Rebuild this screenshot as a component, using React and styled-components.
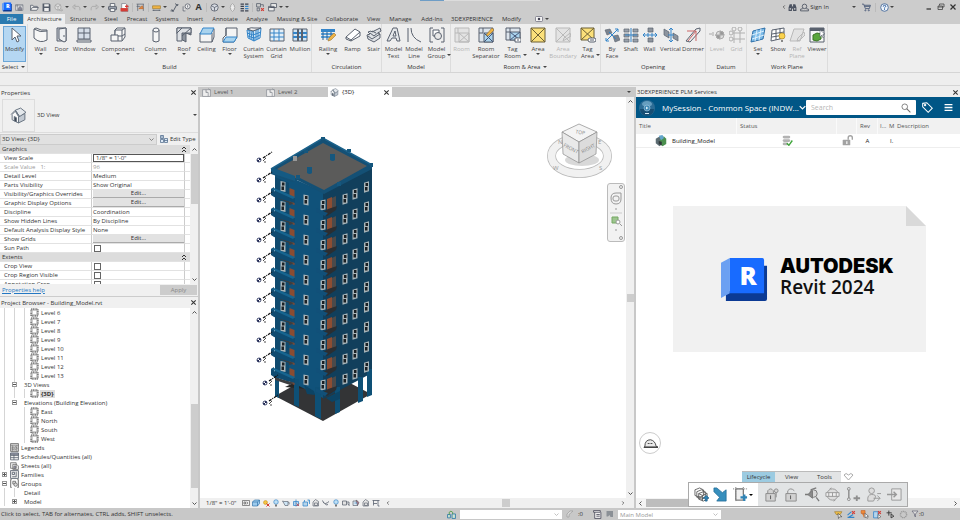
import styled, { createGlobalStyle } from "styled-components"

const GlobalStyle = createGlobalStyle`
    * { box-sizing: border-box; }
    body {
        margin: 0;
        font-family: "Open Sans", "Noto Sans", sans-serif;
        font-size: 6px;
        line-height: 8px;
        color: #333;
        background: #eee;
        overflow: hidden;
    }
    button, input, select { font: inherit; color: inherit; padding: 0; margin: 0; border: 0; border-radius: 0; background: none; }
    h1, h2, p, ul { margin: 0; padding: 0; font: inherit; list-style: none; }
    svg { display: block; flex: none; }
`;

/* ---------- icons ---------- */

const D = "#59616e";
const B = "#3485c9";
const L = "#a9d3ee";
const G = "#b9b9b9";

const curtain = (
    <g fill="#cfe5f5" stroke={B}>
        <path d="M1 3l6 1 1 10-6-3z M7 4l8-3-1 10-6 3z" />
        <path d="M3 3l1 9M5 4l1 9M10 3v10M12 2v10M1 6l6 2 8-3M2 9l6 2 6-3" fill="none" />
        <path d="M1 2q5-2 7-1l7 0-8 3z" fill="#eee" stroke={D} />
    </g>
);

const glyphs = {
    cursor: <path d="M5 1v12l3-3 2 5 2-1-2-5h4z" fill="#fff" stroke={D} />,
    wall: <path d="M1 2q6 4 13 2v9q-7 4-13-2z M1 2l2-1q5 3 11 2v1" fill="#f6f6f6" stroke={D} />,
    door: <g stroke={D}><path d="M3 1h9v13H3z" fill="#c9cdd3" /><path d="M5 2l7-1v13l-2 1-5-3z" fill="#eef0f2" /><path d="M10 8v2" /></g>,
    window: <g stroke={D}><path d="M2 1h12v11H2z" fill="#d5dde8" /><path d="M8 1v11M2 6h12M1 13h14v2H1z" fill="#eee" /></g>,
    component: <g fill="#f6f6f6" stroke={D}><path d="M5 3l2-2h8v9l-3 4H1V8h4z" /><path d="M5 3h7v6M5 3v5h3v6M12 3l3-2M8 9h4v5M12 9l3-2" /></g>,
    column: <g stroke={D} fill="#f6f6f6"><path d="M5 3v11q3 2 6 0V3z" /><ellipse cx="8" cy="3" rx="3" ry="2" /></g>,
    roof: <g stroke={D}><path d="M1 1h14v7l-5-2v9l-5-3V9L1 7z" fill="#8d949e" /><path d="M1 1h14v5H6v8H1z" fill="#dde0e4" /><path d="M1 6l5-5M6 9l9-8" fill="none" /></g>,
    ceiling: <g stroke={D}><path d="M1 6h12v9H1z" fill="#f4f4f4" /><path d="M4 1h11l-3 6H1z" fill={L} stroke={B} /><path d="M15 2v8l-2 5" fill="none" /></g>,
    floor: <g stroke={D}><path d="M4 1h11v9l-3 5H1v-4l3-3z" fill="#f4f4f4" /><path d="M4 10h11l-3 5H1z" fill={L} stroke={B} /><path d="M4 1v8" /></g>,
    curtainSystem: curtain,
    curtainGrid: <g stroke={B}><path d="M1 2h14v12H1z" fill="#e3eff8" stroke={D} /><path d="M1 6h14M1 10h14M5 2v12M10 2v12" fill="none" /></g>,
    mullion: <g stroke={D}><path d="M1 2h14v12H1z" fill="#cfe5f5" /><path d="M1 6h14M1 10h14" stroke={B} strokeWidth="2" /><path d="M6 2v12M10 2v12" strokeWidth="2" /></g>,
    railing: <g><path d="M1 2h14v3H1z" fill={B} /><path d="M1 6h13v2H1zM1 9h10v2H1z" fill="#5ca3dc" /><path d="M3 5v8M7 5v8M11 5v6" stroke="#2b5f93" /><path d="M8 14l1-3 5-5 2 2-5 5z" fill="#f0b445" stroke="#9a7433" strokeWidth=".6" /></g>,
    ramp: <g stroke={D} fill="#fff"><path d="M1 10l9-8 5 3v4l-9 5-5-2z" /><path d="M1 10l5 3 9-8M6 13v1" fill="none" /></g>,
    stair: <g stroke={D} fill="#dfe2e6"><path d="M1 8l3-1-2-2 3-1 1 1 8-4 1 3-3 2 2 1v4l-6 4-6-3z" /><path d="M2 9l4 3 8-5M4 6l4 3 5-4M6 4l4 2" fill="none" /></g>,
    modelText: <g stroke={D}><path d="M1 14L7 1h4l3 13h-3l-1-3H6l-2 3z" fill="#e4e7ea" /><path d="M7 9l2-5 1 5z" fill="#fff" /></g>,
    modelLine: <path d="M2 1v14M5 1q0 10 10 14" fill="none" stroke={D} />,
    modelGroup: <g stroke={D} fill="none"><path d="M4 1H1v14h3M12 1h3v14h-3" /><path d="M4 3h6v6H4z" fill="#fff" /><circle cx="9" cy="9" r="3.5" fill="#e8e8e8" /></g>,
    room: <g stroke={G} fill="#e3e3e3"><path d="M1 1h14v14H1zM4 1v5M1 6h4M5 6h10v9H5zM5 6l10 9M15 6L5 15" /></g>,
    roomSeparator: <g stroke={D}><path d="M1 1h14v14H1z" fill="#dce4ec" /><path d="M5 1v5H1" fill="none" /><path d="M6 6h9v9H6z" fill={L} /><path d="M6 6l9 9M15 6l-9 9" stroke="#457" /><path d="M8 8l6-7 2 2-6 6z" fill="#f0b445" stroke="#8a6a30" strokeWidth=".6" /></g>,
    tagRoom: <g stroke={D}><path d="M1 1h14v12H1z" fill="#dce4ec" /><path d="M5 1v4H1" fill="none" /><path d="M5 5h10v8H5z" fill={L} /><path d="M5 5l10 8M15 5L5 13" stroke="#457" /><path d="M10 11h6v4h-6z" fill="#fff" /><path d="M12 13h2" /></g>,
    area: <g stroke="#6b5f35"><path d="M1 1h14v14H1z" fill="#fbe07a" /><path d="M1 1l14 14M15 1L1 15" /></g>,
    areaBoundary: <g stroke={G} fill="#e3e3e3"><path d="M1 1h14v14H1zM1 1l14 14M15 1L1 15M8 14l1-3 6-5 1 3z" /></g>,
    tagArea: <g stroke="#6b5f35"><path d="M1 1h13v12H1z" fill="#fbe07a" /><path d="M1 1l13 12M14 1L1 13" /><rect x="8" y="11" width="8" height="4" rx="2" fill="#fff" stroke={D} /><path d="M10 13h4" stroke={D} /></g>,
    byFace: <g><path d="M1 3l5-1 2 4-5 2zM9 9l5-1 2 5-5 2z" fill="#7b838e" stroke={D} strokeWidth=".6" /><path d="M2 14L14 2M11 2h3v3M2 11v3h3M5 5l7 7" stroke={B} fill="none" /></g>,
    shaft: <g><path d="M1 2h5v3H1zM10 2h5v3h-5zM1 7h5v3H1zM10 7h5v3h-5zM1 12h5v3H1zM10 12h5v3h-5z" fill="#9aa1ab" stroke={D} strokeWidth=".7" /><path d="M8 1v14M2 8h12" stroke={B} /></g>,
    wallOpening: <g><path d="M6 1h5v4H6zM6 11h5v4H6z" fill="#8d949e" stroke={D} strokeWidth=".7" /><path d="M1 8h14M3 6L1 8l2 2M13 6l2 2-2 2M6 6v4M10 6v4" stroke={B} fill="none" /></g>,
    vertical: <g><path d="M1 2l5 3v6L1 8zM10 6l5 3v5l-5-3z" fill="#8d949e" stroke={D} strokeWidth=".7" /><path d="M8 1v14M6 3l2-2 2 2M6 13l2 2 2-2M5 8h6" stroke={B} fill="none" /></g>,
    dormer: <g fill="none"><path d="M1 14L11 2l4-1v3L5 15z" fill="#eee" stroke={D} /><path d="M2 4h9v10M3 14L11 4" stroke="#c66" /></g>,
    level: <g stroke="#aaa"><path d="M0 7h3M4 5v4M6 8h3" fill="none" /><circle cx="11" cy="8" r="4" fill="#ddd" /><path d="M11 4v4h4a4 4 0 0 0-4-4M11 12V8H7a4 4 0 0 0 4 4" fill="#999" /></g>,
    grid: <g stroke="#b0b0b0" fill="none"><path d="M5 4v12M11 4v12M4 6h12M4 12h12" /><circle cx="5" cy="2" r="2" /><circle cx="11" cy="2" r="2" /><circle cx="2" cy="6" r="2" /><circle cx="2" cy="12" r="2" /></g>,
    set: <g stroke="#2d6fa8"><path d="M3 4l12-3-2 11-12 3z" fill="#7cbbe8" /><path d="M2 8l12-4M2 12l12-4M7 3L5 14M11 2L9 13" fill="none" stroke="#dceffc" /></g>,
    show: <g stroke={D}><path d="M2 3l12-2v10L1 14z" fill="#fff" /><path d="M2 7l12-2M2 10l12-2M6 2v11M10 1v11" /><circle cx="12" cy="9" r="3" fill="#fbd34d" stroke="#b58f2a" strokeWidth=".7" /><path d="M11 13h2v2h-2z" fill="#888" stroke="none" /></g>,
    refPlane: <g stroke={G} fill="#e3e3e3"><path d="M5 2h10l-4 12H1zM8 14l1-3 6-6 1 3-5 5z" /></g>,
    viewer: <g><path d="M1 1h14v14H1z" fill="#f7f7f7" stroke={D} /><path d="M1 1h14v3H1z" fill={D} /><path d="M4 8l4-2 4 1v5l-4 2-4-1z" fill="#5aa63c" stroke="#3a7524" /><path d="M11 3v7l2-2 1 3 1-1-1-3h2z" fill="#fff" stroke={D} strokeWidth=".6" /></g>,

    home: <g stroke={D} fill="#eee"><path d="M1 3h13v10H1zM1 5h13M4 3v10" /><path d="M6 9l3-3 3 3v4H6z" fill="#889" /></g>,
    open: <path d="M1 13V4h4l1 2h7v2h2l-3 5zM1 13l3-5h10" fill="#eee" stroke={D} strokeWidth="1.4" />,
    save: <g><path d="M1 1h12l2 2v12H1z" fill="#545c69" /><path d="M4 2h8v4H4zM4 9h8v5H4z" fill="#eee" /></g>,
    sync: <g stroke="#a5a5a5" fill="#ddd" strokeWidth="1.4"><circle cx="7" cy="7" r="5.5" /><path d="M7 7l5-4M7 7v6M7 7L2 4M9 13h6M13 10l2 3-2 2" /></g>,
    undo: <path d="M1 7l4-4v3h7q3 2 2 7M1 7l4 4V8" fill="none" stroke="#a5a5a5" strokeWidth="1.5" />,
    redo: <path d="M15 7l-4-4v3H4q-3 2-2 7M15 7l-4 4V8" fill="none" stroke="#a5a5a5" strokeWidth="1.5" />,
    print: <g stroke="#4b5260" strokeWidth="1.4" fill="#fff"><path d="M4 6V1h8v5" /><rect x="1" y="6" width="14" height="6" rx="1" fill="#9ba2ad" /><path d="M4 10h8v5H4z" /></g>,
    pdf: <g><path d="M3 1h7l4 4v10H3z" fill="#fff" stroke={D} /><path d="M1 9h13v6H1z" fill="#d43c35" /><path d="M9 6h6M12 3v6" stroke="#d43c35" strokeWidth="2" /></g>,
    clash: <g stroke={D} fill="none" strokeWidth="1.3"><path d="M1 2h13M1 6h7M3 2v12M13 2v12" /><path d="M5 10l6-5 2 5z" fill="#e08a46" stroke="#c06a2a" /></g>,
    measure: <g><path d="M1 5h14v5H1z" fill="#f0b445" stroke="#96701f" /><path d="M1 13h14M3 12v2M13 12v2" stroke={D} strokeWidth="1.5" /></g>,
    dim: <path d="M1 14h5L12 3h3M3 11l3 5M9 1l5 4" fill="none" stroke="#4b5260" strokeWidth="1.6" />,
    tag: <g stroke="#4b5260" fill="#eee" strokeWidth="1.3"><circle cx="10" cy="6" r="4.5" /><path d="M2 6v8h4M10 4v4" /></g>,
    cube: <g stroke="#4b5260" strokeWidth="1.3" fill="#d7dbe2"><circle cx="8" cy="8" r="6.5" /><path d="M3 5l5 3 5-3M8 8v6" /></g>,
    section: <g stroke="#999" strokeWidth="1.3" fill="#eee"><circle cx="8" cy="8" r="4" /><path d="M4 5L8 1l4 4M4 11l4 4 4-4" /></g>,
    thin: <g stroke="#3b4250" strokeWidth="2"><path d="M1 2h6M9 2h6M1 6h6M1 10h6M1 14h6M9 14h6" /><path d="M9 6h6M9 10h6" stroke={B} /></g>,
    closeViews: <g fill="none" strokeWidth="1.4"><path d="M1 1h7v6H1zM8 3h5v4" stroke={D} /><path d="M2 9h4v5H2z" stroke={D} /><path d="M9 9l5 5M14 9l-5 5" stroke="#d43c35" strokeWidth="2" /></g>,
    windows: <g fill="#eee" stroke="#4b5260" strokeWidth="1.4"><path d="M5 1h10v7H5zM1 6h10v8H1zM1 8h10" /></g>,
    binoculars: <g fill="#4b5260"><path d="M3 2h4v12H1V8zM9 2h4l2 6v6H9z" /><path d="M7 6h2v4H7z" /><path d="M3 9h2v3H3zM11 9h2v3h-2z" fill="#ccc" /></g>,
    person: <g fill="none" stroke="#4b5260" strokeWidth="1.5"><circle cx="8" cy="6" r="4" /><path d="M5 10l-4 1v3h14v-3l-4-1" /></g>,
    cart: <g fill="none" stroke="#4b5a78" strokeWidth="1.6"><path d="M0 2h3l3 8h7l2-6H4M5 6h9" /><circle cx="6" cy="13" r="1" /><circle cx="12" cy="13" r="1" /></g>,
    help: <g><circle cx="8" cy="8" r="6.8" fill="#eef4fa" stroke="#4a6c9b" strokeWidth="1.6" /><path d="M5.8 6.5q0-2.5 2.2-2.5t2.2 2q0 1-2.2 2.5v1.5M8 11v1.5" fill="none" stroke="#2c5da0" strokeWidth="1.7" /></g>,
    minimize: <path d="M3 12h9" stroke="#333" strokeWidth="2.5" />,
    restore: <g fill="none" stroke="#444" strokeWidth="1.6"><path d="M5 5V2h9v6h-3M2 6h9v7H2zM2 8h9" /></g>,
    close: <path d="M3 3l10 10M13 3L3 13" stroke="#333" strokeWidth="2.4" />,
    play: <g><rect x="1" y="3" width="14" height="10" rx="2" fill="#f4f4f4" stroke="#667" strokeWidth="1.4" /><circle cx="8" cy="8" r="2.5" fill="#445" /></g>,

    house: <g stroke="#66717f" strokeWidth=".9" strokeLinejoin="round"><path d="M2 7v5l6 3V9L5 4z" fill="#fafafa" /><path d="M8 9v6l6-3V6z" fill="#c3cad3" /><path d="M5 3l5-2 5 4-6 4z" fill="#e4e8ec" /><path d="M1 7l4-4 4 6" fill="none" /><path d="M4 9l2 1v4l-2-1z" fill="#39414d" /></g>,
    editType: <g stroke="#39577c" fill="#dce9f5" strokeWidth="1.3"><path d="M1 1h6v6H1zM1 9h6v6H1zM9 7h6v8H9zM9 11h6M4 1v6" /></g>,
    tabIcon: <g stroke="#8a8f96" fill="#eee" strokeWidth="1.3"><path d="M1 3h14v12H1zM7 3v5h4M11 8v7M11 1l4 3" /></g>,
    view: <g fill="none"><path d="M2 2h12v12H2z" stroke="#7c7c7c" strokeDasharray="2 1" strokeWidth="3" /><path d="M4 4h8v8H4z" fill="#fff" stroke="#8a8a8a" /></g>,
    legends: <g stroke="#666" fill="#ddd"><path d="M1 1h14v14H1z" strokeWidth="1.4" /><path d="M1 4h14M4 7h3v5H4zM9 6l4 3-4 4zM4 4v11M12 4v11" /></g>,
    schedules: <g stroke="#5a6370" fill="#f2f2f2" strokeWidth="1.4"><path d="M1 2h14v12H1zM1 6h14M1 10h14M7 2v12" /><path d="M1 2h14v3H1z" fill="#aab" /></g>,
    sheets: <g stroke="#666" fill="#eee" strokeWidth="1.3"><path d="M1 3h10v10H1zM5 6h7l3 3v6H5z" /><path d="M7 9h3v4H7z" fill="#aac" /></g>,
    families: <g stroke="#5a6370" fill="#eee" strokeWidth="1.5"><path d="M1 1h14v14H1zM4 4h4v4H4zM11 3v9H4" /></g>,
    groups: <g stroke="#666" fill="#ddd" strokeWidth="1.4"><path d="M3 1H1v14h2M13 1h2v14h-2M5 4h5v5H5z" /><circle cx="10" cy="10" r="3" /></g>,

    model: <g><path d="M1 5l5-3 5 2v7l-5 4-5-4z" fill="#5c6c72" /><path d="M7 3l5-1 3 3v7l-5 3-4-4z" fill="#4b8f4e" /><path d="M5 1l5-1 2 4-4 3z" fill="#63a5cc" /><path d="M5 8l4 1v5l-4-2z" fill="#30373a" /></g>,
    db: <g><g fill="#b3b3b3"><rect x="1" y="1" width="11" height="4" rx="2" /><rect x="1" y="6" width="11" height="4" rx="2" /><rect x="1" y="11" width="8" height="4" rx="2" /></g><path d="M7 12l3 3 5-7" fill="none" stroke="#3fa63a" strokeWidth="2" /></g>,
    unlock: <g><rect x="1" y="7" width="11" height="8" rx="1" fill="#a2a2a2" /><path d="M9 7V4q0-3 3-3t3 3v3" fill="none" stroke="#a2a2a2" strokeWidth="2" /><path d="M6 9h2v4H6z" fill="#eee" /></g>,
    search: <g fill="none" stroke="#6d6d6d" strokeWidth="1.3"><circle cx="6" cy="6" r="4.5" /><path d="M9 9l6 6" strokeWidth="1.8" /></g>,
    tagWhite: <g fill="none" stroke="#fff" strokeWidth="1.5"><path d="M1 2l6-1 8 8-6 6-8-8z" /><circle cx="4.5" cy="4.5" r="1" /></g>,
    menu: <path d="M1 3h14M1 8h14M1 13h14" stroke="#fff" strokeWidth="2.3" />,
    compass: <g><circle cx="8" cy="8" r="8" fill="#2c6c95" /><path d="M1 9a7 7 0 0 0 14 0z" fill="#174e74" /><ellipse cx="8" cy="4" rx="5" ry="3" fill="#7fb3d2" opacity=".7" /><circle cx="8" cy="8" r="3" fill="#3e88b4" stroke="#a9cde2" strokeWidth=".6" /><path d="M7 6.5l2.5 1.5L7 9.5zM6 13h4v1H6zM2 7v2M14 7v2" fill="#d8edf8" /></g>,
    helmet: <g stroke="#444" fill="#e9e9e9"><path d="M2 11q0-7 6-7 5 1 6 7l2 1H1z" /><path d="M1 12h15" strokeWidth="1.5" /><path d="M5 8h2M8 8h2" /></g>,

    saveStack: <g fill="#fff" stroke="#555" strokeWidth=".9"><path d="M1 3l5-2 4 2v6l-4 2-5-2zM3 5l5-2 4 2v6l-4 2-5-2zM5 7l5-2 4 2v6l-4 2-5-2z" /><path d="M5 7l4 2 5-2M9 9v6M5 10l4 2 5-2" fill="none" /><path d="M13 9l3 3h-2v3h-2v-3h-2z" fill="#2f83b5" stroke="#1d648f" /></g>,
    arrowDown: <path d="M1 1l3 0 6 5 4-3v12H4l3-4-6-6z" fill="#378fbd" stroke="#1f6a95" strokeWidth=".8" />,
    newDoc: <g><path d="M3 2h8v12H3z" fill="#f0f0f0" stroke="#555" /><path d="M0 2h15M3 0v15M11 0v8" fill="none" stroke="#777" strokeDasharray="1 1" /><path d="M8 11h7M12 8v7" stroke="#2f83b5" strokeWidth="2.5" /></g>,
    lockKey: <g stroke="#8c8c8c" fill="#d2d2d2"><path d="M2 7h10v8H2zM4 7V4q3-4 6 0v3" /><path d="M7 9v4" stroke="#555" /><circle cx="13" cy="4" r="2" /><path d="M13 6v5" /></g>,
    lockOpen: <g stroke="#8c8c8c" fill="#d2d2d2"><path d="M2 7h11v8H2z" /><path d="M4 7V4q3-4 7 0" fill="none" /><path d="M7 9v4" stroke="#555" /></g>,
    find: <g stroke="#7a7a7a" fill="#d8d8d8"><path d="M0 8h4M6 3l6-2M12 11l3 4" strokeWidth="1.4" /><circle cx="9" cy="7" r="4" /><path d="M3 8l5-4v8z" fill="#8a8a8a" /></g>,
    replace: <g stroke="#999" fill="#ddd"><circle cx="8" cy="8" r="6" /><path d="M1 6h14v4H1z" fill="#eee" /><path d="M4 6v4M8 6v4M12 6v4M5 2l2-1M9 15l2-1" /></g>,
    addPoint: <g stroke="#8f8f8f" fill="none"><path d="M3 3v9" strokeWidth="1.6" /><circle cx="3" cy="2" r="1.5" /><circle cx="3" cy="13" r="1.5" /><path d="M8 12h7M11.5 9v6" strokeWidth="2" /></g>,
    share: <g stroke="#999" fill="#ddd"><circle cx="6" cy="4" r="3" /><path d="M2 15q-1-7 4-7t4 3l-2 4z" /><path d="M8 12h7M12 9l3 3-3 3M12 7h4" fill="none" /></g>,
    exit: <g stroke="#999" fill="#e8e8e8"><path d="M5 2h10v12H5z" /><path d="M0 8h9M7 5l3 3-3 3" fill="none" strokeWidth="1.5" /></g>,

    detail: <g stroke="#555" fill="#eee" strokeWidth="1.3"><path d="M1 3h14v10H1z" /><path d="M4 6h3v4H4zM9 6l3 2-3 2" /></g>,
    shaded: <g stroke="#2d6fa8" fill="#9ccbee" strokeWidth="1.3"><path d="M1 6l4-4h10v7l-4 5H1zM1 6h10v8M11 6l4-4" /></g>,
    sun: <g><circle cx="7" cy="7" r="4" fill="#f4c542" stroke="#c28a1c" /><path d="M9 9l6 6M15 9l-6 6" stroke="#d43c35" strokeWidth="2" /></g>,
    bulb: <g><circle cx="8" cy="6" r="4.5" fill="#bfe0f5" stroke={B} strokeWidth="1.3" /><path d="M6 11h4v4H6z" fill="#777" /></g>,
    tea: <g stroke={D} fill="#cde4f4" strokeWidth="1.3"><path d="M1 4l3 1h8v8H6L4 9zM12 6q4 0 2 5" /></g>,
    crop: <g fill="#b5d5ec" stroke={B} strokeWidth="1.5"><path d="M3 5h10v8H3zM8 1v14" /><path d="M9 9l5 5M14 9l-5 5" stroke="#d43c35" /></g>,
    cropShow: <g fill="#b5d5ec" stroke={B} strokeWidth="1.5"><path d="M2 6h9v8H2zM11 2h4v8M5 2v4" /></g>,
    lockView: <g fill="#e2e2e2" stroke={D} strokeWidth="1.3"><path d="M2 6l5-5 6 4v9H2zM5 8h6v5H5z" /></g>,
    glasses: <path d="M1 3q2 7 6 6t7-4M6 9q2 5 6 2" fill="none" stroke={D} strokeWidth="1.7" />,
    box: <g fill="#e2e2e2" stroke={D} strokeWidth="1.5"><path d="M1 4h8v8H1zM9 6h5v6M11 9l4 5" /></g>,
    analysis: <g fill="#dbe7f0" stroke={D} strokeWidth="1.3"><path d="M2 4h9v9H2z" /><path d="M8 2l6 5-3 6z" fill="#d77" /><path d="M5 8h7" stroke={B} /></g>,
    reveal: <path d="M1 3h14M3 3v10M3 9h7M12 3v11h3" fill="none" stroke={D} strokeWidth="1.6" />,
    filter: <path d="M2 2h12l-5 6v6l-2-2V8z" fill="#ddd" stroke="#667" strokeWidth="1.4" />,
    select: <g><path d="M1 3h13l-3 5H4z" fill="#f0c14b" stroke="#96701f" /><path d="M7 6l1 9 2-3h4z" fill="#fff" stroke="#333" /></g>,
    selectLink: <g><path d="M1 9l7-6M3 13l8-5M1 13h12" stroke={B} strokeWidth="2" /><path d="M9 2l5 5M14 2L9 7" stroke="#d43c35" strokeWidth="2" /></g>,
    selectPin: <g><path d="M2 1h7v5H2zM4 7h3v6" fill="#f08c3a" stroke="#c05a1a" /><path d="M9 6v8l2-2 2 3 1-1-1-3h2z" fill="#fff" stroke="#444" /></g>,
    selectFace: <g><path d="M1 3h8v11H1z" fill="#b5d5ec" stroke={B} strokeWidth="1.4" /><path d="M9 2l5 5M14 2L9 7" stroke="#d43c35" strokeWidth="2" /><path d="M9 8v7l5-3z" fill="#fff" stroke="#444" /></g>,
    drag: <g fill="none" stroke="#333" strokeWidth="1.6"><path d="M1 5h9M5 1v9M9 7v7l5-3z" /></g>,
    gear: <circle cx="8" cy="8" r="5.5" fill="none" stroke="#999" strokeWidth="2.5" strokeDasharray="2 1" />,
    worksets: <g fill="#cfe3d0" stroke="#2c7aa8" strokeWidth="1.5"><path d="M1 8h5v6H1zM9 7h6v8H9z" /><path d="M4 8V4q3-4 6 0v3" fill="none" stroke="#4b9d3f" /></g>,
    pen: <path d="M2 14V8l6-6h6l-8 7v5z" fill="#ddd" stroke="#999" strokeWidth="1.3" />,
    options: <g fill="#eee" stroke="#445" strokeWidth="1.4"><path d="M1 1h12v3H1zM3 4v11h11V4M6 8h6M6 11h6" /></g>,
    exclude: <path d="M1 2h13v12H9l-2-4-3 3H1z" fill="#8b9096" />,
};

const Icon = ({ name, size = 9 }) => (
    <svg width={size} height={size} viewBox="0 0 16 16" fill="none" aria-hidden="true">{glyphs[name]}</svg>
);

const Caret = styled.i`
    flex: none;
    width: 0;
    height: 0;
    border: 2px solid transparent;
    border-top-color: ${({ $color }) => $color || "#444"};
    border-bottom: 0;
`;

const Chevron = ({ dir = "down", size = 6, color = "#444" }) => {
    const d = { down: "M1 3l4 4 4-4", up: "M1 7l4-4 4 4", left: "M7 1L3 5l4 4", right: "M3 1l4 4-4 4" }[dir];
    return <svg width={size} height={size} viewBox="0 0 10 10"><path d={d} fill="none" stroke={color} strokeWidth="1.8" /></svg>
};

/* ---------- shell ---------- */

const Shell = styled.div`
    height: 100vh;
    display: flex;
    flex-direction: column;
`;

const Spacer = styled.span`
    flex: ${({ $w }) => ($w ? `0 0 ${$w}px` : "1")};
`;

const TitleBar = styled.header`
    display: flex;
    align-items: center;
    height: 14px;
    background: #ccc;
`;

const Progress = styled.span`
    position: absolute;
    top: 0;
    left: 420px;
    width: 120px;
    height: 1px;
    background: linear-gradient(to right, #6e9dc6 24px, #dcdcdc 24px);
`;

const QuickAccess = styled.div`
    display: flex;
    align-items: center;
    gap: 3px;
    padding: 0 2px;
    ${Caret} { margin: 0 0 0 -1px; }
`;

const IconButton = styled.button`
    display: flex;
    align-items: center;
    justify-content: center;
    width: ${({ $w }) => ($w || 9)}px;
    height: 12px;
    font-size: 9px;
    font-weight: 700;
`;

const Divider = styled.span`
    width: 1px;
    height: 9px;
    background: #bbb;
`;

const SignIn = styled.button`
    width: 19px;
    white-space: nowrap;
`;

const TabBar = styled.nav`
    display: flex;
    align-items: stretch;
    height: 10px;
    background: #ccc;
`;

const Tab = styled.button`
    display: flex;
    align-items: center;
    justify-content: center;
    gap: 2px;
    width: ${({ $w }) => $w}px;
    white-space: nowrap;
    background: ${({ $active }) => ($active ? "#eee" : "none")};
`;

const FileTab = styled(Tab)`
    margin-right: 1px;
    color: #fff;
    background: #2a7ab0;
`;

const Ribbon = styled.div`
    display: flex;
    height: 49px;
    background: #eee;
    border-bottom: 1px solid #d5d5d5;
`;

const Group = styled.section`
    display: flex;
    flex-direction: column;
    padding-top: 2px;
    border-right: 1px solid #dcdcdc;
`;

const Tools = styled.div`
    flex: 1;
    display: flex;
    padding-left: ${({ $pad }) => $pad}px;
`;

const GroupName = styled.h2`
    display: flex;
    align-items: center;
    justify-content: center;
    gap: 3px;
    height: 10px;
    white-space: nowrap;
`;

const Tool = styled.button`
    width: ${({ $w }) => $w}px;
    height: 36px;
    display: flex;
    flex-direction: column;
    align-items: center;
    padding-top: 1px;
    line-height: 7px;
    white-space: nowrap;
    color: ${({ disabled }) => (disabled ? "#b5b5b5" : "#444")};
`;

const ModifyTool = styled(Tool)`
    background: #b5d7f2;
    border: 1px solid #6ba5d6;
    padding-top: 0;
`;

const ToolLabel = styled.span`
    margin-top: 3px;
    text-align: center;
`;

const SideCaret = styled(Caret)`
    display: inline-block;
    margin: 0 -6px 2px 2px;
`;

const Gutter = styled.div`
    height: 13px;
    background: #eee;
    border-bottom: 1px solid #d5d5d5;
`;

const ribbon = [
    { name: "Build", pad: 2, tools: [
        ["wall", "Wall", 21, 1], ["door", "Door", 21], ["window", "Window", 24], ["component", "Component", 44, 1],
        ["column", "Column", 31, 1], ["roof", "Roof", 26, 1], ["ceiling", "Ceiling", 19], ["floor", "Floor", 27, 1],
        ["curtainSystem", "Curtain|System", 21], ["curtainGrid", "Curtain|Grid", 25], ["mullion", "Mullion", 22]] },
    { name: "Circulation", pad: 5, tools: [["railing", "Railing", 22, 1], ["ramp", "Ramp", 27], ["stair", "Stair", 15]] },
    { name: "Model", pad: 0, tools: [["modelText", "Model|Text", 23], ["modelLine", "Model|Line", 18], ["modelGroup", "Model|Group", 27, 1]] },
    { name: "Room & Area", pad: 0, menu: true, tools: [
        ["room", "Room", 21, 0, 1], ["roomSeparator", "Room|Separator", 28], ["tagRoom", "Tag|Room", 25, 1],
        ["area", "Area", 26, 1], ["areaBoundary", "Area|Boundary", 24, 0, 1], ["tagArea", "Tag|Area", 25, 1]] },
    { name: "Opening", pad: 0, tools: [
        ["byFace", "By|Face", 22], ["shaft", "Shaft", 16], ["wallOpening", "Wall", 21], ["vertical", "Vertical", 21], ["dormer", "Dormer", 24]] },
    { name: "Datum", pad: 1, tools: [["level", "Level", 20, 0, 1], ["grid", "Grid", 19, 0, 1]] },
    { name: "Work Plane", pad: 0, tools: [["set", "Set", 22, 1], ["show", "Show", 18], ["refPlane", "Ref|Plane", 20, 0, 1], ["viewer", "Viewer", 20]] },
];

const RibbonTool = ({ icon, label, w, menu, disabled }) => {
    const [first, second] = label.split("|");
    return (
        <Tool $w={w} disabled={disabled}>
            <Icon name={icon} size={16} />
            <ToolLabel>
                {first}
                {second && <><br />{second}</>}
                {second && menu ? <SideCaret /> : null}
            </ToolLabel>
            {menu && !second ? <Caret /> : null}
        </Tool>
    )
};

const tabs = [
    ["Structure", 36], ["Steel", 20], ["Precast", 32], ["Systems", 28], ["Insert", 28], ["Annotate", 32], ["Analyze", 32],
    ["Massing & Site", 48], ["Collaborate", 42], ["View", 21], ["Manage", 33], ["Add-Ins", 30], ["3DEXPERIENCE", 50], ["Modify", 29],
];

const quick = ["home", "gap", "open", "save", "sync", "v", "undo", "v", "redo", "v", "print", "pdf", "|", "clash", "|", "measure", "v", "dim", "tag", "A", "|", "cube", "v", "section", "thin", "|", "closeViews", "windows", "v", "v"];

const quickItem = (q, i) => {
    if (q === "v") return <Caret key={i} />;
    if (q === "|") return <Divider key={i} />;
    if (q === "gap") return <span key={i} />;
    return <IconButton key={i} aria-label={q}>{q === "A" ? "A" : <Icon name={q} />}</IconButton>
};

const AppBadge = ({ size }) => (
    <svg width={size} height={size} viewBox="0 0 48 48">
        <path d="M5 36h42v8a2 2 0 0 1-2 2H5zM40 10h7v30h-7z" fill="#0b3a94" />
        <path d="M0 7l9-5v36l-9 5z" fill="#6ba0f2" />
        <path d="M9 2h33a2 2 0 0 1 2 2v34H9z" fill="#186bff" />
        <text x="19" y="30" fontFamily="Open Sans" fontWeight="800" fontSize="26" fill="#fff">R</text>
    </svg>
);

/* ---------- docked panels ---------- */

const Workspace = styled.main`
    flex: 1;
    min-height: 0;
    display: flex;
    padding-top: 1px;
`;

const Dock = styled.aside`
    width: 200px;
    display: flex;
    flex-direction: column;
    background: #f0f0f0;
    border-right: 2px solid #c8c8c8;
`;

const PanelTitle = styled.h2`
    flex: none;
    display: flex;
    align-items: center;
    justify-content: space-between;
    height: ${({ $h }) => $h || 11}px;
    padding: 0 1px;
    white-space: nowrap;
`;

const TypeRow = styled.div`
    flex: none;
    display: flex;
    align-items: center;
    gap: 2px;
    height: 35px;
    padding: 0 1px 0 2px;
    border-bottom: 1px solid #ddd;
`;

const Thumb = styled.div`
    display: grid;
    place-items: center;
    width: 33px;
    height: 33px;
    border: 1px solid #ddd;
`;

const PickRow = styled.div`
    flex: none;
    display: flex;
    align-items: center;
    height: 12px;
`;

const Picker = styled.label`
    display: grid;
    align-items: center;
    width: ${({ $w }) => $w}px;
    height: ${({ $h }) => $h || 9}px;
    background: ${({ $bg }) => $bg || "#fff"};
    border: 1px solid ${({ $line }) => $line || "#fff"};
    & > * { grid-area: 1 / 1; }
    & > svg { justify-self: end; margin-right: 2px; pointer-events: none; }
`;

const Select = styled.select`
    appearance: none;
    width: 100%;
    height: 8px;
    padding: 0 1px;
    color: ${({ $muted }) => ($muted ? "#999" : "#333")};
`;

const EditType = styled.button`
    display: flex;
    align-items: center;
    gap: 2px;
    margin-left: 3px;
    white-space: nowrap;
`;

const Scrolled = styled.div`
    display: flex;
    overflow: hidden;
    background: #fff;
    flex: ${({ $h }) => ($h ? `0 0 ${$h}px` : "1 1 0")};
    min-height: 0;
`;

const Track = styled.div`
    flex: none;
    width: 8px;
    display: flex;
    flex-direction: column;
    align-items: center;
    justify-content: space-between;
    padding: 2px 0;
    background: #f0f0f0;
`;

const Grip = styled.span`
    width: 7px;
    height: ${({ $h }) => $h}px;
    margin-top: ${({ $top }) => $top}px;
    margin-bottom: auto;
    background: #cdcdcd;
`;

const PropTable = styled.table`
    flex: 1;
    width: 190px;
    height: max-content;
    border-collapse: separate;
    border-spacing: 0;
    table-layout: fixed;
    td, th {
        height: 9px;
        padding: 0;
        border-bottom: 1px solid #e2e2e2;
        line-height: 8px;
        font-weight: 400;
        text-align: left;
        white-space: nowrap;
    }
    td:first-child { padding-left: 4px; border-right: 1px solid #ccc; }
    td:nth-child(2) { border-right: 1px solid #ccc; padding-left: 1px; }
`;

const Section = styled.th`
    background: #dcdcdc;
    & > span { display: flex; justify-content: space-between; padding: 0 3px 0 2px; }
`;

const Muted = styled.span`
    color: #999;
    margin-right: ${({ $gap }) => $gap || 0}px;
`;

const ScaleInput = styled.input`
    display: block;
    width: 91px;
    height: 8px;
    padding: 0 2px;
    border: 1px solid #555;
    line-height: 6px;
`;

const EditButton = styled.button`
    display: block;
    width: 91px;
    height: 8px;
    background: #e2e2e2;
    border-bottom: 1px solid #aaa;
    line-height: 7px;
`;

const Check = styled.input`
    appearance: none;
    display: block;
    width: 7px;
    height: 7px;
    margin-left: 1px;
    border: 1px solid #666;
    background: #fff;
`;

const HelpRow = styled.div`
    flex: none;
    display: flex;
    align-items: center;
    justify-content: space-between;
    height: 13px;
    padding: 0 1px 1px 2px;
    border-bottom: 1px solid #ccc;
    a { color: #2477c2; }
`;

const Apply = styled.button`
    width: 37px;
    height: 10px;
    background: #ccc;
    color: #888;
`;

const properties = [
    ["#", "Graphics"],
    ["View Scale", "input"],
    ["Scale Value", "muted"],
    ["Detail Level", "Medium"],
    ["Parts Visibility", "Show Original"],
    ["Visibility/Graphics Overrides", "edit"],
    ["Graphic Display Options", "edit"],
    ["Discipline", "Coordination"],
    ["Show Hidden Lines", "By Discipline"],
    ["Default Analysis Display Style", "None"],
    ["Show Grids", "edit"],
    ["Sun Path", "check"],
    ["#", "Extents"],
    ["Crop View", "check"],
    ["Crop Region Visible", "check"],
    ["Annotation Crop", "check"],
];

const PropValue = ({ label, kind }) => {
    if (kind === "input") return <ScaleInput aria-label={label} defaultValue={`1/8" = 1'-0"`} />;
    if (kind === "muted") return <Muted>96</Muted>;
    if (kind === "edit") return <EditButton aria-label={`Edit ${label}`}>Edit...</EditButton>;
    if (kind === "check") return <Check type="checkbox" aria-label={label} />;
    return kind
};

const PropRow = ({ label, kind }) => {
    if (label === "#") {
        return (
            <tr>
                <Section colSpan={3}>
                    <span>{kind}<svg width="6" height="8" viewBox="0 0 6 8"><path d="M1 4l2-2 2 2M1 7l2-2 2 2" fill="none" stroke="#333" /></svg></span>
                </Section>
            </tr>
        )
    }
    return (
        <tr>
            <td>{kind === "muted" ? <><Muted $gap={5}>{label}</Muted><Muted>1:</Muted></> : label}</td>
            <td><PropValue label={label} kind={kind} /></td>
            <td />
        </tr>
    )
};

const Tree = styled.ul`
    flex: 1;
    white-space: nowrap;
`;

const Node = styled.li`
    display: flex;
    align-items: center;
    gap: ${({ $icon }) => ($icon ? 2 : 6)}px;
    height: 9px;
    padding-left: ${({ $indent }) => $indent}px;
    background: ${({ $rails }) => ($rails || []).map((x) => `linear-gradient(#d5d5d5, #d5d5d5) ${x}px 0 / 1px 100% no-repeat`).join(", ") || "none"};
`;

const Toggle = styled.button`
    width: 5px;
    height: 5px;
    margin-right: 1px;
    border: 1px solid #999;
    background:
        linear-gradient(#555, #555) center / 3px 1px no-repeat,
        linear-gradient(#555, #555) center / ${({ $open }) => ($open ? 0 : 1)}px 3px no-repeat,
        #fff;
`;

const NodeText = styled.span`
    ${({ $selected }) => $selected && "background: #ddd; font-weight: 700; padding: 0 1px; margin-left: -1px;"}
`;

const level = (n) => ({ text: n, icon: "view", indent: 30, rails: [4, 14, 24] });
const tree = [
    ...[6, 7, 8, 9, 10, 11, 12, 13].map((n) => level(`Level ${n}`)),
    { text: "3D Views", open: true, toggle: true, indent: 12, rails: [4, 14] },
    { text: "{3D}", icon: "view", indent: 30, rails: [4, 14, 24], selected: true },
    { text: "Elevations (Building Elevation)", open: true, toggle: true, indent: 12, rails: [4] },
    ...["East", "North", "South", "West"].map((n) => ({ text: n, icon: "view", indent: 30, rails: [4, 24] })),
    { text: "Legends", icon: "legends", indent: 10, rails: [4] },
    { text: "Schedules/Quantities (all)", icon: "schedules", indent: 10, rails: [4] },
    { text: "Sheets (all)", icon: "sheets", indent: 10, rails: [4] },
    { text: "Families", icon: "families", toggle: true, indent: 2 },
    { text: "Groups", icon: "groups", toggle: true, open: true, indent: 2 },
    { text: "Detail", indent: 24, rails: [4, 14] },
    { text: "Model", toggle: true, indent: 12, rails: [4] },
];

/* ---------- drawing area ---------- */

const Center = styled.section`
    flex: 1;
    min-width: 0;
    display: flex;
    flex-direction: column;
    background: #fff;
    border-right: 2px solid #c8c8c8;
`;

const ViewTabs = styled.div`
    flex: none;
    display: flex;
    align-items: center;
    height: 10px;
    background: #c8c8c8;
    padding-right: 3px;
`;

const ViewTab = styled.button`
    display: flex;
    align-items: center;
    gap: 3px;
    width: 64px;
    height: 10px;
    padding: 0 2px;
    background: ${({ $active }) => ($active ? "#fff" : "none")};
    color: ${({ $active }) => ($active ? "#222" : "#555")};
    & > svg:last-child:not(:first-child) { margin-left: auto; }
`;

const CanvasRow = styled.div`
    flex: 1;
    min-height: 0;
    display: flex;
`;

const Canvas = styled.div`
    position: relative;
    flex: 1;
    overflow: hidden;
`;

const BuildingSvg = styled.svg`
    position: absolute;
    left: 50px;
    top: 32px;
`;

const CubeSvg = styled.svg`
    position: absolute;
    right: 12px;
    top: 23px;
`;

const NavBar = styled.div`
    position: absolute;
    right: 1px;
    top: 86px;
    width: 18px;
    height: 59px;
    border: 1px solid #bbb;
    border-radius: 3px;
    background: #f2f2f2;
`;

const ViewControls = styled.div`
    flex: none;
    display: flex;
    align-items: center;
    gap: 2px;
    height: 10px;
    padding: 0 9px 0 6px;
    background: #f0f0f0;
    white-space: nowrap;
`;

const HGrip = styled.span`
    width: ${({ $w }) => $w}px;
    height: 8px;
    background: ${({ $dark }) => ($dark ? "#bdbdbd" : "#cdcdcd")};
`;

const Window = ({ x, y, s }) => (
    <g transform={`translate(${x} ${y})`}>
        <path d={`M-2.5 ${-5 - s}L2.5 ${-5 + s}V${5 + s}L-2.5 ${5 - s}z`} fill="#a9b4b8" />
        <path d="M-1 -4h2.500v3h-2.500zM-1.500 0h2.500v3.500h-2.500z" fill="#1b2125" />
    </g>
);

const floors = Array.from({ length: 10 }, (_, i) => i * 20);

const Building = () => (
    <BuildingSvg width="130" height="300" viewBox="250 130 130 300">
        <path d="M275 397l48-27 48 25-48 27z" fill="#333436" />
        <path d="M285 388l38-18 20 10-12 12z" fill="#252525" />
        <path d="M275 171l48 22v206l-48-24z" fill="#10527a" />
        <path d="M323 193l49-25v206l-49 26z" fill="#113f5c" />
        <path d="M275 370h4v29l-4-2zM294 380h5v28l-5-2zM315 388h6v32l-6-3zM335 388h5v25l-5 2zM358 378h5v24l-5 2zM367 370h5v26l-5 2z" fill="#0e5076" />
        <path d="M304 386l10 6 1 4-8-1zM326 399l14-7v8l-8 3z" fill="#0c4465" />
        <path d="M271 170l52-31 49 27v4l-48 25-27-14-4 2-22-8z" fill="#145075" />
        <path d="M277 170l46-26 44 23-43 24-26-13-5 2-14-6z" fill="#5b5b5a" />
        <path d="M271 170l52-31 49 27" fill="none" stroke="#1c628b" strokeWidth="1.5" />
        <path d="M293 157h4v5h-4z" fill="#999" />
        <path d="M307 168h5v6q-2 2-5 0zM330 155h5v6q-2 2-5 0zM304 151h4v3h-4zM321 138h4v3h-4zM347 150h4v3h-4zM370 164h3v4h-3zM296 176h4v4h-4zM337 183h4v4h-4z" fill="#15577e" />
        {floors.map((f) => (
            <g key={f} transform={`translate(0 ${f})`}>
                <path d="M275 178l14 6v19l-14-6z" fill="#0f4a6e" />
                <path d="M289.5 189l5 2v15l-5-2z" fill="#8b4c31" />
                <path d="M327 200l5-2v12l-5 2z" fill="#8d4d32" />
                <path d="M332 199l4-2v11l-4 3z" fill="#4c4a4a" />
                <Window x={283} y={187.5} s={.5} />
                <Window x={306} y={201} s={.5} />
                <Window x={323} y={206} s={-.5} />
                <Window x={345} y={200} s={-.8} />
                <Window x={355} y={195} s={-.8} />
                <Window x={366.5} y={188} s={-.8} />
                <path d="M275 198l19 6-4 2-15-5z" fill="#3d3e40" />
                <path d="M271 190l3-2v4l21 7v5l-21-6-3-2z" fill="#0f4b70" />
                <path d="M271 190l3-1 21 9-2 2z" fill="#176590" />
                <path d="M322 214l6-4 9-3-1 4-9 6z" fill="#2c2e31" />
                <path d="M316 209l9 4 3 1-3 3-9-4z" fill="#115079" />
            </g>
        ))}
        <path d="M271 170l3-1 21 8v5l-21-7-3-1z" fill="#145a83" />
        {[161, 181, 201, 221, 241, 261, 281, 301, 321, 341, 361, 384, 404].map((y, i) => (
            <g key={y} transform={`translate(${i > 10 ? 265 : 259} ${y})`}>
                <circle r="2" fill="#fff" stroke="#1b2450" strokeWidth=".8" />
                <path d="M0-2v2h2a2 2 0 0 0-2-2M0 2V0h-2a2 2 0 0 0 2 2" fill="#1b2450" />
                <path d="M4-2l9-6" stroke="#111" strokeWidth="1.3" strokeDasharray="3 1 1 1" />
                <path d="M4 1l3-3M5 2h2" stroke="#222" strokeWidth=".8" />
            </g>
        ))}
    </BuildingSvg>
);

const ViewCube = () => (
    <CubeSvg width="68" height="60" viewBox="546 120 68 60">
        <ellipse cx="579.5" cy="156" rx="28" ry="17.5" fill="none" stroke="#b9b9b9" strokeWidth="9" />
        <ellipse cx="579.5" cy="156" rx="28" ry="17.5" fill="none" stroke="#f1f1f1" strokeWidth="7.5" />
        <ellipse cx="582" cy="160" rx="17" ry="6" fill="#d8d8d8" />
        <g fontSize="6" fill="#999"><text x="553" y="170">W</text><text x="599" y="170">S</text><text x="558" y="144">N</text><text x="598" y="144">E</text></g>
        <g stroke="#8b8b8b" strokeWidth=".7">
            <path d="M579 124l18 8-18 10-17-10z" fill="#f4f4f4" />
            <path d="M562 132l17 10v21l-16-9z" fill="#e9e9e9" />
            <path d="M597 132l-18 10v21l17-9z" fill="#dcdcdc" />
        </g>
        <g fontSize="5" fill="#888" textAnchor="middle">
            <text transform="translate(580 134) rotate(10)">TOP</text>
            <text transform="translate(570 150) rotate(28)">FRONT</text>
            <text transform="translate(589 150) rotate(-28)">RIGHT</text>
        </g>
    </CubeSvg>
);

/* ---------- PLM panel ---------- */

const Plm = styled.section`
    position: relative;
    width: 324px;
    display: flex;
    flex-direction: column;
    background: #fff;
`;

const PlmTitle = styled(PanelTitle)`
    background: #eee;
`;

const PlmBar = styled.div`
    flex: none;
    display: flex;
    align-items: center;
    height: 21px;
    padding: 0 7px 0 3px;
    background: #005686;
    color: #fff;
`;

const Session = styled.button`
    display: flex;
    align-items: center;
    justify-content: space-between;
    flex: 1;
    min-width: 0;
    padding: 0 2px 0 7px;
    font-size: 8px;
    line-height: 12px;
    white-space: nowrap;
`;

const SearchBox = styled.label`
    display: flex;
    align-items: center;
    width: 110px;
    height: 15px;
    padding: 0 5px;
    background: #fff;
    border-radius: 1px;
    margin-right: 5px;
`;

const SearchInput = styled.input`
    flex: 1;
    min-width: 0;
    font-size: 7px;
    outline: 0;
    &::placeholder { color: #b5b5b5; }
`;

const ItemTable = styled.table`
    width: 100%;
    table-layout: fixed;
    border-collapse: separate;
    border-spacing: 0;
    th, td {
        padding: 0 0 0 3px;
        font-weight: 400;
        text-align: left;
        white-space: nowrap;
        overflow: hidden;
    }
    th { height: 16px; background: #f1f1f1; border-right: 1px solid #fafafa; color: #555; }
    th:nth-child(n + 5) { padding-left: 2px; border-right: 0; }
    td { height: 14px; border-bottom: 1px solid #eee; color: #222; }
    svg { margin: 0 auto; }
`;

const Col = styled.col`
    width: ${({ $w }) => ($w ? `${$w}px` : "auto")};
`;

const ItemName = styled.span`
    display: flex;
    align-items: center;
    gap: 5px;
    padding-left: 16px;
    svg { margin: 0; }
`;

const Centered = styled.td`
    && { text-align: center; padding: 0; }
`;

const Preview = styled.div`
    position: relative;
    display: flex;
    align-items: center;
    gap: 12px;
    height: 146px;
    margin: 58px 34px 0 37px;
    padding-left: 48px;
    background: #f1f1f1;
    clip-path: polygon(0 0, calc(100% - 20px) 0, 100% 20px, 100% 100%, 0 100%);
    &::after {
        content: "";
        position: absolute;
        top: 0;
        right: 0;
        width: 20px;
        height: 20px;
        background: #d9d9d9;
    }
`;

const BrandBlock = styled.div`
    padding-bottom: 5px;
`;

const Brand = styled.p`
    font-family: Inter, sans-serif;
    font-weight: 900;
    font-size: 20px;
    line-height: 20px;
    color: #000;
`;

const Product = styled.p`
    font-weight: 600;
    font-size: 19px;
    line-height: 22px;
    color: #111;
`;

const RoundButton = styled.button`
    position: absolute;
    left: 3px;
    bottom: 54px;
    display: grid;
    place-items: center;
    width: 22px;
    height: 22px;
    border: 1px solid #ccc;
    border-radius: 50%;
    background: #fff;
`;

const ActionDock = styled.div`
    position: absolute;
    right: 52px;
    bottom: 1px;
    width: 220px;
`;

const ActionTabs = styled.div`
    display: flex;
    align-items: center;
    padding-left: 54px;
`;

const ActionTab = styled.button`
    width: 33px;
    height: 11px;
    background: ${({ $active }) => ($active ? "#9ccbe1" : "#e2e4e5")};
    color: #333;
    border-top: 1px solid #bbb;
`;

const Heart = styled.svg`
    margin-left: 2px;
`;

const Actions = styled.div`
    display: flex;
    height: 25px;
    border: 1px solid #aaa;
    background: #e2e4e5;
`;

const ActionSet = styled.div`
    display: flex;
    align-items: center;
    justify-content: space-evenly;
    width: ${({ $w }) => $w}px;
    background: ${({ $white }) => ($white ? "#fff" : "none")};
    ${Caret} { margin-left: -3px; }
`;

const HTrack = styled.div`
    display: flex;
    align-items: center;
    gap: 3px;
    height: 10px;
    margin-top: auto;
    padding: 0 2px;
    background: #f4f4f4;
`;

/* ---------- status bar ---------- */

const StatusBar = styled.footer`
    flex: none;
    display: flex;
    align-items: center;
    height: 12px;
    padding: 0 36px 0 1px;
    background: #c8c8c8;
    white-space: nowrap;
`;

const StatusText = styled.span`
    width: 446px;
`;

const StatusGroup = styled.span`
    display: flex;
    align-items: center;
    gap: 4px;
    margin: 0 ${({ $m }) => $m || 0}px;
`;

const App = () => {
    return (
        <Shell>
            <GlobalStyle />
            <TitleBar>
                <QuickAccess>
                    <AppBadge size={10} />
                    {quick.map(quickItem)}
                </QuickAccess>
                <Progress />
                <Spacer />
                <Chevron dir="left" size={4} />
                <IconButton $w={12} aria-label="Find"><Icon name="binoculars" /></IconButton>
                <IconButton $w={12} aria-label="Account"><Icon name="person" /></IconButton>
                <SignIn>Sign In</SignIn>
                <Spacer $w={23} />
                <Caret />
                <Spacer $w={4} />
                <IconButton $w={12} aria-label="Store"><Icon name="cart" /></IconButton>
                <Spacer $w={3} />
                <Divider />
                <Spacer $w={3} />
                <IconButton $w={10} aria-label="Help"><Icon name="help" /></IconButton>
                <Spacer $w={1} />
                <Caret />
                <Spacer $w={29} />
                <IconButton $w={12} aria-label="Minimize"><Icon name="minimize" size={8} /></IconButton>
                <IconButton $w={12} aria-label="Restore"><Icon name="restore" size={8} /></IconButton>
                <IconButton $w={12} aria-label="Close"><Icon name="close" size={8} /></IconButton>
                <Spacer $w={1} />
            </TitleBar>

            <TabBar>
                <FileTab $w={23}>File</FileTab>
                <Tab $active $w={41}>Architecture</Tab>
                {tabs.map(([name, w]) => <Tab key={name} $w={w}>{name}</Tab>)}
                <Spacer $w={8} />
                <Tab $w={16} aria-label="Ribbon display"><Icon name="play" size={8} /><Caret /></Tab>
            </TabBar>

            <Ribbon>
                <Group>
                    <Tools $pad={3}>
                        <ModifyTool $w={23}>
                            <Icon name="cursor" size={16} />
                            <ToolLabel>Modify</ToolLabel>
                        </ModifyTool>
                        <Spacer $w={1} />
                    </Tools>
                    <GroupName>Select <Caret /></GroupName>
                </Group>
                {ribbon.map((g) => (
                    <Group key={g.name}>
                        <Tools $pad={g.pad}>
                            {g.tools.map(([icon, label, w, menu, disabled]) => (
                                <RibbonTool key={icon} icon={icon} label={label} w={w} menu={menu} disabled={!!disabled} />
                            ))}
                        </Tools>
                        <GroupName>{g.name} {g.menu && <Caret />}</GroupName>
                    </Group>
                ))}
            </Ribbon>
            <Gutter />

            <Workspace>
                <Dock>
                    <PanelTitle>Properties <Icon name="close" size={7} /></PanelTitle>
                    <TypeRow>
                        <Thumb><Icon name="house" size={17} /></Thumb>
                        3D View
                        <Spacer />
                        <Caret />
                    </TypeRow>
                    <PickRow>
                        <Picker $w={157} $h={11} $bg="#e1e1e1" $line="#ccc">
                            <Select aria-label="Type"><option>{"3D View: {3D}"}</option></Select>
                            <Chevron size={5} color="#777" />
                        </Picker>
                        <EditType><Icon name="editType" size={8} />Edit Type</EditType>
                    </PickRow>
                    <Scrolled $h={139}>
                        <PropTable>
                            <colgroup><Col $w={92} /><Col $w={93} /><Col /></colgroup>
                            <tbody>
                                {properties.map(([label, kind]) => <PropRow key={label + kind} label={label} kind={kind} />)}
                            </tbody>
                        </PropTable>
                        <Track>
                            <Chevron dir="up" size={5} />
                            <Grip $h={50} $top={2} />
                            <Chevron size={5} />
                        </Track>
                    </Scrolled>
                    <HelpRow><a href="#help">Properties help</a><Apply>Apply</Apply></HelpRow>

                    <PanelTitle>Project Browser - Building_Model.rvt <Icon name="close" size={7} /></PanelTitle>
                    <Scrolled>
                        <Tree>
                            {tree.map((n) => (
                                <Node key={n.text} $indent={n.indent} $icon={n.icon} $rails={n.rails}>
                                    {n.toggle && <Toggle $open={n.open} aria-label={`Toggle ${n.text}`} />}
                                    {n.icon && <Icon name={n.icon} size={9} />}
                                    <NodeText $selected={n.selected}>{n.text}</NodeText>
                                </Node>
                            ))}
                        </Tree>
                        <Track>
                            <Chevron dir="up" size={5} />
                            <Grip $h={84} $top={89} />
                            <Chevron size={5} />
                        </Track>
                    </Scrolled>
                </Dock>

                <Center>
                    <ViewTabs>
                        <ViewTab><Icon name="tabIcon" />Level 1</ViewTab>
                        <ViewTab><Icon name="tabIcon" />Level 2</ViewTab>
                        <ViewTab $active><Icon name="house" />{"{3D}"}<Icon name="close" size={7} /></ViewTab>
                        <Spacer />
                        <Caret />
                    </ViewTabs>
                    <CanvasRow>
                        <Canvas>
                            <Building />
                            <ViewCube />
                            <NavBar>
                                <svg width="16" height="57" viewBox="0 0 16 57" fill="none" stroke="#999">
                                    <circle cx="13" cy="3" r="1.5" />
                                    <path d="M3 14q0-5 5-5h5v6q0 5-5 5t-5-6z" />
                                    <rect x="5" y="12" width="6" height="5" rx="2" />
                                    <path d="M7 25h2M7 46h2" />
                                    <path d="M2 29h12" stroke="#ccc" />
                                    <path d="M4 33h6v6H4z" fill="#9cc58e" stroke="#74a863" />
                                    <circle cx="10" cy="38" r="2" fill="#fff" />
                                    <path d="M12 40l2 2" />
                                    <circle cx="13" cy="54" r="1.5" />
                                </svg>
                            </NavBar>
                        </Canvas>
                        <Track>
                            <Chevron dir="up" size={5} />
                            <Grip $h={8} $top={190} />
                            <Chevron size={5} />
                        </Track>
                    </CanvasRow>
                    <ViewControls>
                        {`1/8" = 1'-0"`}
                        <Spacer $w={1} />
                        {["detail", "shaded", "sun", "bulb", "tea", "crop", "cropShow", "lockView", "glasses", "bulb", "box", "analysis", "lockView", "reveal"].map((n, i) => (
                            <Icon key={i} name={n} size={8} />
                        ))}
                        <Spacer $w={2} />
                        <Chevron dir="left" size={4} />
                        <Spacer />
                        <HGrip $w={8} />
                        <Spacer $w={107} />
                        <Chevron dir="right" size={4} />
                    </ViewControls>
                </Center>

                <Plm>
                    <PlmTitle $h={10}>3DEXPERIENCE PLM Services <Icon name="close" size={7} /></PlmTitle>
                    <PlmBar>
                        <Icon name="compass" size={16} />
                        <Session>MySession - Common Space (INDW... <Chevron size={7} color="#fff" /></Session>
                        <SearchBox>
                            <SearchInput placeholder="Search" aria-label="Search" />
                            <Icon name="search" size={10} />
                        </SearchBox>
                        <IconButton $w={12} aria-label="Tags"><Icon name="tagWhite" size={11} /></IconButton>
                        <Spacer $w={11} />
                        <IconButton $w={9} aria-label="Menu"><Icon name="menu" size={9} /></IconButton>
                    </PlmBar>
                    <ItemTable>
                        <colgroup><Col $w={101} /><Col $w={100} /><Col $w={20} /><Col $w={21} /><Col $w={9} /><Col $w={8} /><Col /></colgroup>
                        <thead>
                            <tr><th>Title</th><th>Status</th><th /><th>Rev</th><th>I...</th><th>M</th><th>Description</th></tr>
                        </thead>
                        <tbody>
                            <tr>
                                <td><ItemName><Icon name="model" size={12} />Building_Model</ItemName></td>
                                <Centered><Icon name="db" size={11} /></Centered>
                                <Centered><Icon name="unlock" size={11} /></Centered>
                                <Centered>A</Centered>
                                <td />
                                <td>I.</td>
                                <td />
                            </tr>
                        </tbody>
                    </ItemTable>
                    <Preview>
                        <AppBadge size={47} />
                        <BrandBlock>
                            <Brand>AUTODESK</Brand>
                            <Product>Revit 2024</Product>
                        </BrandBlock>
                    </Preview>
                    <HTrack>
                        <Chevron dir="left" size={5} />
                        <HGrip $w={60} $dark />
                        <Spacer />
                        <Chevron dir="right" size={5} />
                    </HTrack>
                    <RoundButton aria-label="Assistant"><Icon name="helmet" size={15} /></RoundButton>
                    <ActionDock>
                        <ActionTabs>
                            <ActionTab $active>Lifecycle</ActionTab>
                            <ActionTab>View</ActionTab>
                            <ActionTab>Tools</ActionTab>
                            <Heart width="11" height="9" viewBox="0 0 11 9"><path d="M1 3q2-3 4.500 0 2.500-3 4.500 0L5.500 8z" fill="#fff" stroke="#aaa" /></Heart>
                        </ActionTabs>
                        <Actions>
                            <ActionSet $w={69} $white>
                                <Icon name="saveStack" size={15} />
                                <Icon name="arrowDown" size={15} />
                                <Icon name="newDoc" size={15} />
                                <Caret $color="#000" />
                            </ActionSet>
                            <ActionSet $w={149}>
                                {["lockKey", "lockOpen", "find", "replace", "addPoint", "share", "exit"].map((n) => <Icon key={n} name={n} size={15} />)}
                            </ActionSet>
                        </Actions>
                    </ActionDock>
                </Plm>
            </Workspace>

            <StatusBar>
                <StatusText>Click to select, TAB for alternates, CTRL adds, SHIFT unselects.</StatusText>
                <Icon name="worksets" />
                <Spacer $w={4} />
                <Picker $w={102}>
                    <Select aria-label="Active workset"><option></option></Select>
                    <Chevron size={5} color="#bbb" />
                </Picker>
                <StatusGroup $m={4}><Icon name="pen" size={8} />:0</StatusGroup>
                <Spacer $w={6} />
                <StatusGroup><Icon name="options" /><Icon name="exclude" size={8} /></StatusGroup>
                <Spacer $w={4} />
                <Picker $w={103}>
                    <Select $muted aria-label="Design option"><option>Main Model</option></Select>
                    <Chevron size={5} color="#bbb" />
                </Picker>
                <Spacer />
                <StatusGroup>
                    {["select", "selectLink", "selectPin", "selectFace", "drag", "gear"].map((n) => <Icon key={n} name={n} />)}
                </StatusGroup>
                <Spacer $w={3} />
                <Icon name="filter" size={8} />:0
            </StatusBar>
        </Shell>
    )
}

export default App
